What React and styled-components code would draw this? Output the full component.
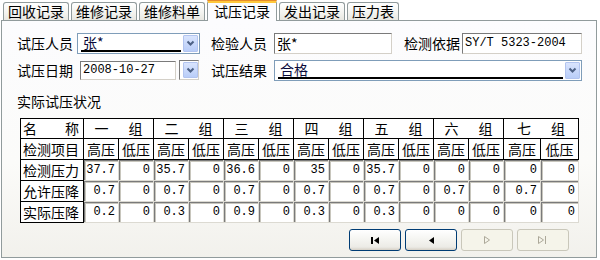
import React from 'react';
import styled, { createGlobalStyle, css } from 'styled-components';

const Global = createGlobalStyle`
  html, body { margin: 0; padding: 0; background: #fff; }
  body {
    font-family: "Noto Sans CJK SC", "Noto Sans", sans-serif;
    font-size: 14px;
    color: #000;
  }
  * { box-sizing: border-box; }
`;

const Frame = styled.div`
  width: 600px;
  height: 260px;
  padding: 0 3px 0 1px;
  display: flex;
  flex-direction: column;
`;

const TabStrip = styled.div`
  display: flex;
  align-items: flex-end;
  height: 20px;
  padding-left: 2px;
  gap: 2px;
  position: relative;
  z-index: 2;
`;

const Tab = styled.div`
  height: 18px;
  padding: 0 4px;
  border: 1px solid #919b9c;
  border-bottom: none;
  border-radius: 3px 3px 0 0;
  background: linear-gradient(#ffffff, #f3f3ef 60%, #e8e7e1);
  font-size: 14px;
  line-height: 17px;
  white-space: nowrap;
  ${(p) =>
    p.$active &&
    css`
      height: 21px;
      margin-bottom: -1px;
      padding: 0 6px;
      background: #fcfcfe;
      border-top: 3px solid #ffc83c;
      box-shadow: inset 0 1px 0 #fcfcfe;
      line-height: 17px;
      position: relative;
      &::before {
        content: '';
        position: absolute;
        left: -1px;
        right: -1px;
        top: -3px;
        height: 1px;
        background: #e68b2c;
        border-radius: 3px 3px 0 0;
      }
    `}
`;

const Panel = styled.div`
  height: 238px;
  border: 1px solid #919b9c;
  background: linear-gradient(#fcfcfe, #fbfbf9 60%, #f2f1ec);
  display: flex;
  flex-direction: column;
`;

const FormGrid = styled.div`
  margin-top: 11px;
  padding-left: 15px;
  display: grid;
  grid-template-columns: 60px 123px 11px 63px 118px 12px 58px 120px;
  grid-template-rows: 22px 22px;
  row-gap: 5px;
  align-items: center;
`;

const Label = styled.div`
  grid-column: ${(p) => p.$col};
  font-size: 14px;
  line-height: 16px;
  white-space: nowrap;
`;

const Combo = styled.div`
  grid-column: ${(p) => p.$span};
  height: 21px;
  border: 1px solid #7f9db9;
  background: #fff;
  display: flex;
  align-items: stretch;
  padding: 1px 1px 1px 3px;
  gap: 2px;
`;

const ComboText = styled.div`
  flex: 1;
  border-bottom: 2px solid #000;
  font-size: 14px;
  line-height: 15px;
  padding-left: 2px;
  color: #0a0a3a;
`;

const DropBtn = styled.div`
  width: 15px;
  flex: none;
  background: linear-gradient(#d9e4fd, #b9cdf8);
  border: 1px solid #b2c4ef;
  border-radius: 1px;
  display: flex;
  align-items: center;
  justify-content: center;
`;

const TextBox = styled.div`
  grid-column: ${(p) => p.$col};
  height: ${(p) => p.$h || 21}px;
  width: ${(p) => (p.$w ? p.$w + 'px' : 'auto')};
  border: 1px solid;
  border-color: #7a7a7a #d4d0c8 #d4d0c8 #7a7a7a;
  background: #fff;
  font-family: ${(p) => (p.$mono ? '"Liberation Mono", monospace' : '"Noto Sans CJK SC", sans-serif')};
  font-size: ${(p) => (p.$mono ? 12 : 14)}px;
  line-height: ${(p) => (p.$h || 21) - 2}px;
  padding-left: 2px;
  white-space: nowrap;
  overflow: hidden;
`;

const DateCombo = styled.div`
  grid-column: 2;
  display: flex;
  align-items: center;
  gap: 3px;
  padding-left: 3px;
`;

const DropBox = styled.div`
  width: 20px;
  height: 20px;
  border: 1px solid;
  border-color: #7a7a7a #d4d0c8 #d4d0c8 #7a7a7a;
  background: #fff;
  padding: 1px 1px 1px 3px;
  display: flex;
`;

const SectionTitle = styled.div`
  margin: 12px 0 0 15px;
  font-size: 14px;
  line-height: 16px;
`;

const Grid = styled.div`
  margin: 9px 0 0 18px;
  width: 559px;
  display: grid;
  grid-template-columns: 63px repeat(12, 35px) 37px 38px;
  grid-template-rows: 20px 21px 21px 21px 21px;
  border-top: 1px solid #000;
  border-left: 1px solid #000;
`;

const HeadCell = styled.div`
  grid-column: span ${(p) => p.$span || 1};
  border-right: 1px solid #000;
  border-bottom: 1px solid #000;
  background: #fff;
  font-size: 14px;
  line-height: 19px;
  display: flex;
  align-items: center;
  justify-content: ${(p) => (p.$left ? 'flex-start' : 'center')};
  gap: ${(p) => p.$gap || 0}px;
  padding-left: ${(p) => (p.$left ? 2 : 0)}px;
  white-space: nowrap;
`;

const DataCell = styled.div`
  border-right: 1px solid #dcdad2;
  border-bottom: 1px solid #dcdad2;
  background: #fff;
  box-shadow: inset 1px 1px 0 #7a7a7a, inset 2px 2px 0 #c8c6bd;
  font-family: "Liberation Mono", monospace;
  font-size: 12px;
  line-height: 20px;
  text-align: right;
  padding-right: 3px;
`;

const ButtonRow = styled.div`
  margin-top: 6px;
  padding-right: 27px;
  display: flex;
  justify-content: flex-end;
  gap: 4px;
`;

const NavButton = styled.div`
  width: 52px;
  height: 22px;
  border: 1px solid ${(p) => (p.$disabled ? '#c9c7ba' : '#003c74')};
  border-radius: 3px;
  background: ${(p) =>
    p.$disabled ? '#f5f4ea' : 'linear-gradient(#ffffff, #f4f4f0 50%, #ecebe6 85%, #d6d0c5)'};
  display: flex;
  align-items: center;
  justify-content: center;
`;

const Chevron = () => (
  <svg width="9" height="7" viewBox="0 0 9 7">
    <path d="M1.5 1.5 L4.5 4.5 L7.5 1.5" fill="none" stroke="#4d6185" strokeWidth="2" />
  </svg>
);

const FirstIcon = () => (
  <svg width="10" height="9" viewBox="0 0 10 9">
    <rect x="1" y="1" width="2" height="7" fill="#000" />
    <path d="M9 1 L4 4.5 L9 8 Z" fill="#000" />
  </svg>
);

const PrevIcon = () => (
  <svg width="8" height="9" viewBox="0 0 8 9">
    <path d="M7 1 L2 4.5 L7 8 Z" fill="#000" />
  </svg>
);

const NextIcon = () => (
  <svg width="9" height="10" viewBox="0 0 9 10">
    <path d="M1.5 1.5 L1.5 8.5 L6.5 5 Z" fill="none" stroke="#aca899" strokeWidth="1" />
  </svg>
);

const LastIcon = () => (
  <svg width="12" height="10" viewBox="0 0 12 10">
    <path d="M1.5 1.5 L1.5 8.5 L6.5 5 Z" fill="none" stroke="#aca899" strokeWidth="1" />
    <path d="M8.5 1 L8.5 9" stroke="#aca899" strokeWidth="1" />
  </svg>
);

const tabs = ['回收记录', '维修记录', '维修料单', '试压记录', '发出记录', '压力表'];
const groups = ['一', '二', '三', '四', '五', '六', '七'];
const rows = [
  { label: '检测压力', values: ['37.7', '0', '35.7', '0', '36.6', '0', '35', '0', '35.7', '0', '0', '0', '0', '0'] },
  { label: '允许压降', values: ['0.7', '0', '0.7', '0', '0.7', '0', '0.7', '0', '0.7', '0', '0.7', '0', '0.7', '0'] },
  { label: '实际压降', values: ['0.2', '0', '0.3', '0', '0.9', '0', '0.3', '0', '0.3', '0', '0', '0', '0', '0'] },
];

export default function App() {
  return (
    <>
      <Global />
      <Frame>
        <TabStrip>
          {tabs.map((t) => (
            <Tab key={t} $active={t === '试压记录'}>
              {t}
            </Tab>
          ))}
        </TabStrip>
        <Panel>
          <FormGrid>
            <Label $col={1}>试压人员</Label>
            <Combo $span="2">
              <ComboText>张*</ComboText>
              <DropBtn>
                <Chevron />
              </DropBtn>
            </Combo>
            <Label $col={4}>检验人员</Label>
            <TextBox $col={5}>张*</TextBox>
            <Label $col={7}>检测依据</Label>
            <TextBox $col={8} $mono>
              SY/T 5323-2004
            </TextBox>

            <Label $col={1}>试压日期</Label>
            <DateCombo>
              <TextBox $w={96} $h={19} $mono>
                2008-10-27
              </TextBox>
              <DropBox>
                <DropBtn>
                  <Chevron />
                </DropBtn>
              </DropBox>
            </DateCombo>
            <Label $col={4}>试压结果</Label>
            <Combo $span="5 / 9">
              <ComboText>合格</ComboText>
              <DropBtn>
                <Chevron />
              </DropBtn>
            </Combo>
          </FormGrid>

          <SectionTitle>实际试压状况</SectionTitle>

          <Grid>
            <HeadCell $left $gap={28}>
              <span>名</span>
              <span>称</span>
            </HeadCell>
            {groups.map((g) => (
              <HeadCell key={g} $span={2} $gap={20}>
                <span>{g}</span>
                <span>组</span>
              </HeadCell>
            ))}
            <HeadCell $left>检测项目</HeadCell>
            {groups.map((g) => (
              <React.Fragment key={g}>
                <HeadCell>高压</HeadCell>
                <HeadCell>低压</HeadCell>
              </React.Fragment>
            ))}
            {rows.map((r) => (
              <React.Fragment key={r.label}>
                <HeadCell $left>{r.label}</HeadCell>
                {r.values.map((v, i) => (
                  <DataCell key={i}>{v}</DataCell>
                ))}
              </React.Fragment>
            ))}
          </Grid>

          <ButtonRow>
            <NavButton>
              <FirstIcon />
            </NavButton>
            <NavButton>
              <PrevIcon />
            </NavButton>
            <NavButton $disabled>
              <NextIcon />
            </NavButton>
            <NavButton $disabled>
              <LastIcon />
            </NavButton>
          </ButtonRow>
        </Panel>
      </Frame>
    </>
  );
}
